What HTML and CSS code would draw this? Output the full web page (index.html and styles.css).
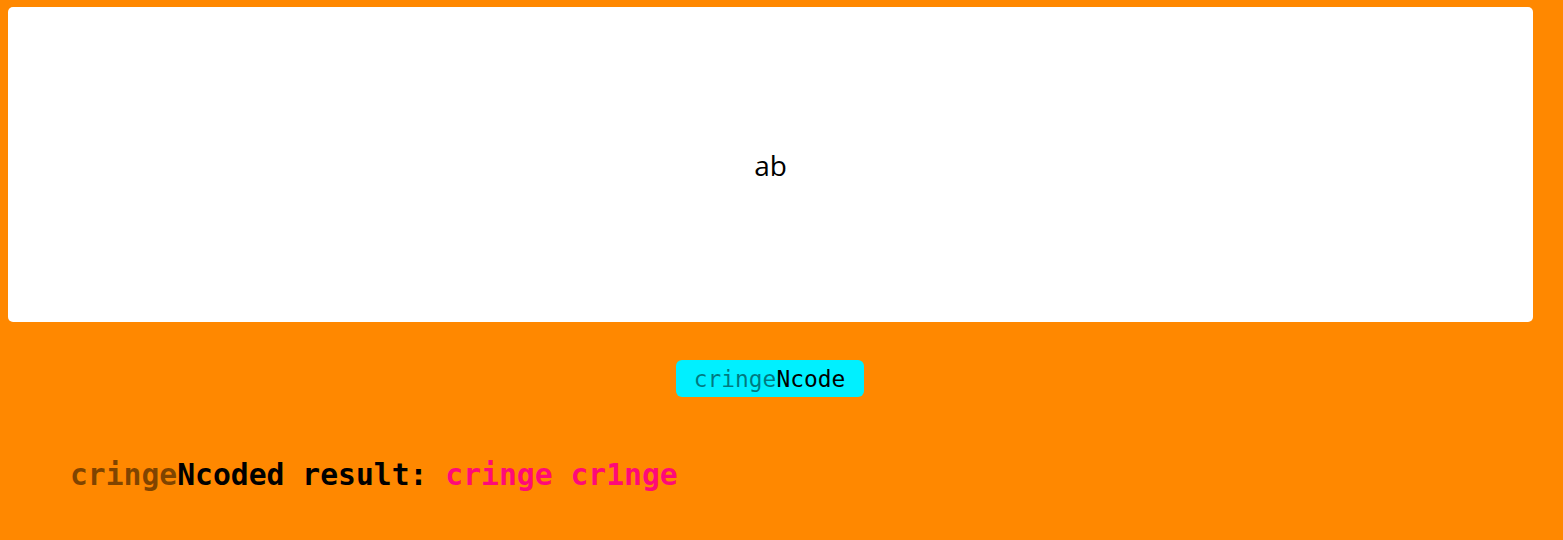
FILE: index.html
```html
<!DOCTYPE html>
<html>
<head>
<meta charset="utf-8">
<link rel="stylesheet" href="styles.css">
</head>
<body>
<div class="page">
  <div class="input-box"><span class="input-text">ab</span></div>
  <div class="actions">
    <button class="btn"><span class="dim">cringe</span>Ncode</button>
  </div>
  <div class="result"><span class="dim">cringe</span>Ncoded result: <span class="out">cringe cr1nge</span></div>
</div>
</body>
</html>
```
FILE: styles.css
```css
html, body {
  margin: 0;
  padding: 0;
  background: #ff8800;
}
.page {
  padding: 7px 30px 0 8px;
  display: flex;
  flex-direction: column;
}
.input-box {
  background: #ffffff;
  border-radius: 5px;
  height: 315px;
  display: flex;
  align-items: center;
  justify-content: center;
}
.input-text {
  font-family: "Open Sans", sans-serif;
  font-size: 28px;
  color: #000;
}
.actions {
  display: flex;
  justify-content: center;
  padding-top: 38px;
  padding-right: 2px;
}
.btn {
  background: #00f0ff;
  border: none;
  border-radius: 6px;
  width: 188px;
  height: 37px;
  padding: 0;
  font-family: "DejaVu Sans Mono", monospace;
  font-size: 22.9px;
  color: #000;
}
.btn .dim {
  color: rgba(0, 0, 0, 0.5);
}
.result {
  margin-top: 60px;
  padding-left: 62px;
  font-family: "DejaVu Sans Mono", monospace;
  font-weight: bold;
  font-size: 29.7px;
  color: #000;
}
.result .dim {
  color: rgba(0, 0, 0, 0.5);
}
.result .out {
  color: #ff0a78;
}
```
